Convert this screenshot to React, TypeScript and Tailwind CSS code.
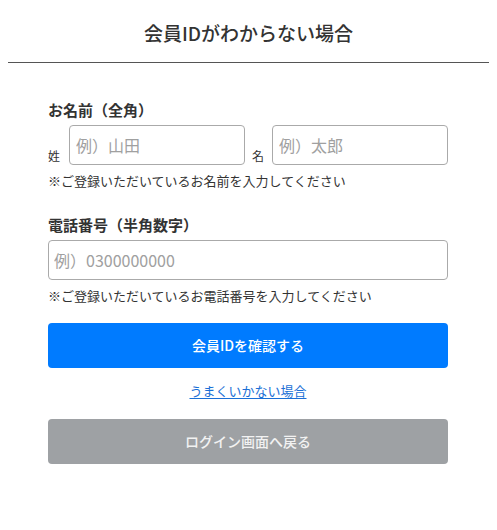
export default function App() {
  const font = { fontFamily: '"Noto Sans CJK JP", "Noto Sans", sans-serif' };

  return (
    <div className="min-h-[530px] bg-white text-[#333]" style={font}>
      {/* Header */}
      <div className="mx-2 border-b border-[#555] pt-[18px] pb-[14px] text-center">
        <h1 className="text-[19px] leading-[30px] font-medium">会員IDがわからない場合</h1>
      </div>

      <div className="ml-12 w-[400px] pt-9">
        {/* Name */}
        <label className="block text-[15px] leading-[22px] font-bold">お名前（全角）</label>
        <div className="mt-1 flex items-end">
          <span className="w-[21px] text-[12px] leading-[18px]">姓</span>
          <input
            className="h-10 w-[176px] rounded border border-[#aaa] px-[6px] text-[16px] placeholder-[#a0a0a0] outline-none"
            placeholder="例）山田"
          />
          <span className="w-[27px] pl-[7px] text-[12px] leading-[18px]">名</span>
          <input
            className="h-10 w-[176px] rounded border border-[#aaa] px-[6px] text-[16px] placeholder-[#a0a0a0] outline-none"
            placeholder="例）太郎"
          />
        </div>
        <p className="mt-1.5 text-[13px] leading-[19px]">※ご登録いただいているお名前を入力してください</p>

        {/* Phone */}
        <label className="mt-6 block text-[15px] leading-[22px] font-bold">電話番号（半角数字）</label>
        <input
          className="mt-1 h-10 w-full rounded border border-[#aaa] px-[5px] text-[16px] placeholder-[#a0a0a0] outline-none"
          placeholder="例）0300000000"
        />
        <p className="mt-1.5 text-[13px] leading-[19px]">※ご登録いただいているお電話番号を入力してください</p>

        {/* Actions */}
        <button className="mt-[18px] flex h-[45px] w-full items-center justify-center rounded bg-[#007bff] text-[14px] font-medium text-white">
          会員IDを確認する
        </button>
        <div className="mt-[13px] text-center text-[13px] leading-[19px]">
          <a href="#" className="text-[#1a6fd6] underline underline-offset-2">
            うまくいかない場合
          </a>
        </div>
        <button className="mt-[19px] flex h-[45px] w-full items-center justify-center rounded bg-[#9ea1a4] text-[14px] font-medium text-[#f2f2f2]">
          ログイン画面へ戻る
        </button>
      </div>
    </div>
  );
}
